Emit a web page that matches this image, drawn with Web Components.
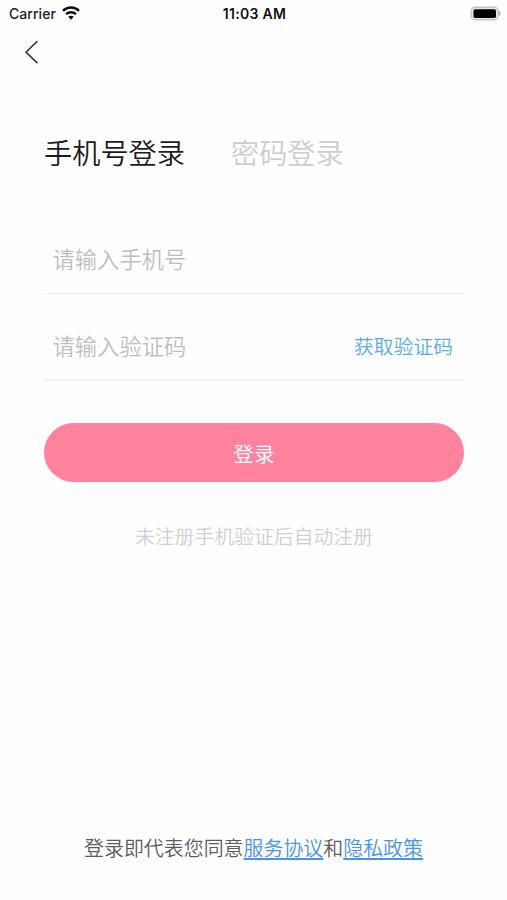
<!DOCTYPE html>
<html lang="zh-CN">
<head>
<meta charset="utf-8">
<title>手机号登录</title>
<style>
html,body{margin:0;background:#fefefe}
body{font-family:Inter,"Noto Sans CJK SC",sans-serif;font-weight:350}
</style>
</head>
<body>
<login-page></login-page>
<script>
const define = (name, html) => customElements.define(name, class extends HTMLElement {
  constructor() {
    super();
    this.attachShadow({ mode: 'open' }).innerHTML = html;
  }
});

define('status-bar', `
<style>
:host{display:grid;grid-template-columns:1fr auto 1fr;align-items:center;height:28px;padding:0 5px 0 9px;box-sizing:border-box;color:#111;font:400 14px/28px Inter,sans-serif}
.left{display:flex;align-items:center;gap:6px;color:#222;font-weight:450;letter-spacing:.05px}
.time{font-weight:600;font-size:14px;letter-spacing:.3px;padding-right:2px}
.battery{justify-self:end;margin-top:-2px}
.wifi{margin-top:-2px}
svg{display:block}
</style>
<div class="left"><span>Carrier</span>
<svg class="wifi" width="18" height="14" viewBox="0 0 18 14" fill="none" stroke="#111" stroke-width="2.5"><path d="M1 4.9C5.4.5 12.6.5 17 4.9M4 8.2c2.8-2.6 7.2-2.6 10 0"/><path d="M9 13.7 6.2 10.8c1.5-1.5 4.1-1.5 5.6 0Z" fill="#111" stroke="none"/></svg></div>
<span class="time">11:03 AM</span>
<svg class="battery" width="32" height="15" viewBox="0 0 32 15"><rect x="1.2" y="1.2" width="27" height="12.6" rx="4" fill="#e8e8e8" stroke="#c4c4c4" stroke-width="1.4"/><rect x="3.5" y="3.3" width="22.5" height="8.6" rx="1.6" fill="#000"/><path d="M29 5c2.2.8 2.2 4.2 0 5Z" fill="#aaa"/></svg>`);

define('back-button', `
<style>
:host{display:block;padding:12px 0 0 24px;height:50px;box-sizing:border-box}
svg{display:block}
</style>
<svg width="16" height="24" viewBox="0 0 16 24" fill="none" stroke="#3c3c3c" stroke-width="1.6"><path d="M13.4 1.2 2 12.2l11.4 11"/></svg>`);

define('login-tab', `
<style>
:host{display:block;font-size:28.2px;line-height:42px;color:#cdcdcd;white-space:nowrap}
:host([active]){color:#1c1c1c}
</style><slot></slot>`);

define('form-field', `
<style>
:host{display:flex;justify-content:space-between;align-items:center;box-sizing:border-box;padding:var(--top,0) 11px var(--bottom,2px) 8.5px;border-bottom:var(--line,1px solid #ececec);height:var(--h,69px);font-size:22.3px;color:#bebebe}
::slotted([slot=action]){font-size:19.8px;color:#5aaae9}
</style><slot></slot><slot name="action"></slot>`);

define('primary-button', `
<style>
:host{display:flex;align-items:center;justify-content:center;height:59px;border-radius:30px;background:#ff829f;color:#fff;font-size:20.7px}
</style><slot></slot>`);

define('agreement-note', `
<style>
:host{display:block;text-align:center;font-size:19.95px;line-height:30px;color:#5c5c5c;white-space:nowrap}
::slotted(a){color:#4795ea;text-decoration:underline;text-decoration-thickness:1.5px;text-underline-offset:2px}
</style><slot></slot>`);

define('login-page', `
<style>
:host{display:flex;flex-direction:column;height:900px;box-sizing:border-box;padding-bottom:36px}
main{padding:0 43px 0 44px}
.tabs{display:flex;gap:46px;margin-top:55px}
.fields{margin-top:50px}
form-field+form-field{--h:87px;--top:17px;--bottom:0px;--line:2px solid #f3f3f3}
primary-button{margin-top:42px}
.hint{margin-top:40px;text-align:center;font-size:19.85px;line-height:30px;color:#d0d0d0}
agreement-note{margin-top:auto}
</style>
<status-bar></status-bar>
<back-button></back-button>
<main>
<div class="tabs"><login-tab active>手机号登录</login-tab><login-tab>密码登录</login-tab></div>
<div class="fields">
<form-field>请输入手机号</form-field>
<form-field>请输入验证码<span slot="action">获取验证码</span></form-field>
</div>
<primary-button>登录</primary-button>
<div class="hint">未注册手机验证后自动注册</div>
</main>
<agreement-note>登录即代表您同意<a>服务协议</a>和<a>隐私政策</a></agreement-note>`);
</script>
</body>
</html>
